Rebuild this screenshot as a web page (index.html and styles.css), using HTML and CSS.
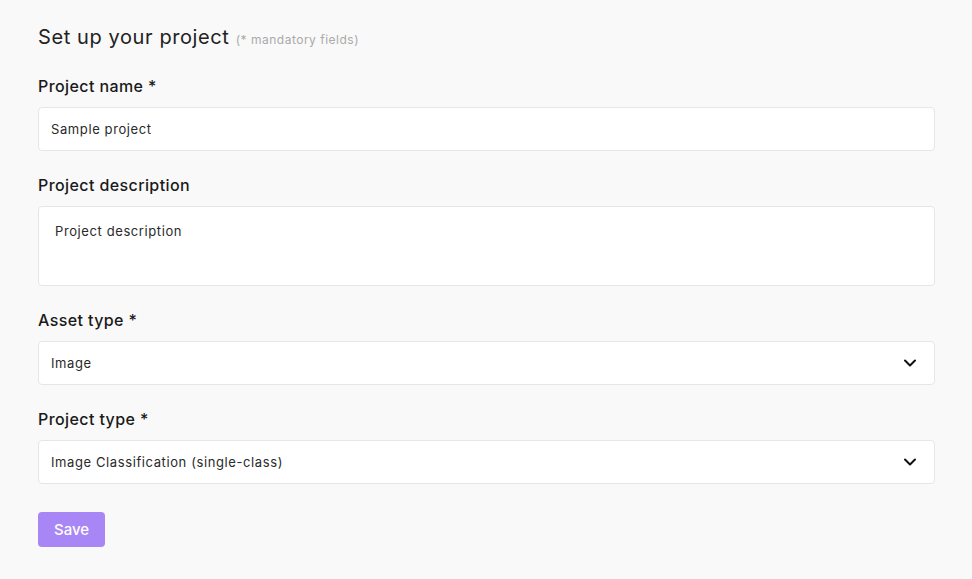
FILE: index.html
```html
<!DOCTYPE html>
<html>
<head>
<meta charset="utf-8">
<link rel="stylesheet" href="styles.css">
</head>
<body>
<div class="page">
  <h1 class="title">Set up your project <span class="hint">(* mandatory fields)</span></h1>
  <div class="field first">
    <label class="label">Project name *</label>
    <div class="input">Sample project</div>
  </div>
  <div class="field">
    <label class="label">Project description</label>
    <div class="textarea">Project description</div>
  </div>
  <div class="field">
    <label class="label">Asset type *</label>
    <div class="input select"><span>Image</span>
      <svg class="chev" width="14" height="14" viewBox="0 0 14 14"><path d="M2 4.5 L7 9.5 L12 4.5" fill="none" stroke="#111" stroke-width="2" stroke-linecap="round" stroke-linejoin="round"/></svg>
    </div>
  </div>
  <div class="field">
    <label class="label">Project type *</label>
    <div class="input select"><span>Image Classification (single-class)</span>
      <svg class="chev" width="14" height="14" viewBox="0 0 14 14"><path d="M2 4.5 L7 9.5 L12 4.5" fill="none" stroke="#111" stroke-width="2" stroke-linecap="round" stroke-linejoin="round"/></svg>
    </div>
  </div>
  <button class="save">Save</button>
</div>
</body>
</html>
```
FILE: styles.css
```css
html, body {
  margin: 0;
  padding: 0;
  background: #f9f9f9;
  font-family: Inter, "Noto Sans", sans-serif;
  color: #1f1f1f;
}
.page {
  padding: 23px 37px 0 38px;
  display: flex;
  flex-direction: column;
}
.title {
  margin: 0;
  font-size: 20px;
  line-height: 28px;
  font-weight: 400;
  color: #222;
  letter-spacing: 0.6px;
}
.hint {
  font-size: 12px;
  color: #aaa;
  letter-spacing: 0.5px;
}
.field {
  margin-top: 24px;
  display: flex;
  flex-direction: column;
}
.field.first {
  margin-top: 22px;
}
.label {
  font-size: 16px;
  line-height: 21px;
  font-weight: 500;
  color: #1a1a1a;
  margin-bottom: 10px;
  letter-spacing: 0.4px;
}
.input {
  height: 42px;
  box-sizing: content-box;
  background: #fff;
  border: 1px solid #e6e6e6;
  border-radius: 4px;
  padding: 0 12px;
  display: flex;
  align-items: center;
  font-size: 13px;
  color: #2a2a2a;
  letter-spacing: 0.6px;
}
.textarea {
  background: #fff;
  border: 1px solid #e6e6e6;
  border-radius: 4px;
  padding: 16px 16px 0;
  box-sizing: border-box;
  height: 80px;
  font-size: 13px;
  line-height: 17px;
  color: #2a2a2a;
  letter-spacing: 0.6px;
}
.select {
  justify-content: space-between;
  padding-right: 17px;
}
.chev {
  display: block;
}
.save {
  margin-top: 28px;
  align-self: flex-start;
  width: 67px;
  height: 35px;
  border: none;
  border-radius: 4px;
  background: #a886f5;
  color: #fff;
  font-family: Inter, "Noto Sans", sans-serif;
  font-size: 15px;
  font-weight: 500;
}
```
